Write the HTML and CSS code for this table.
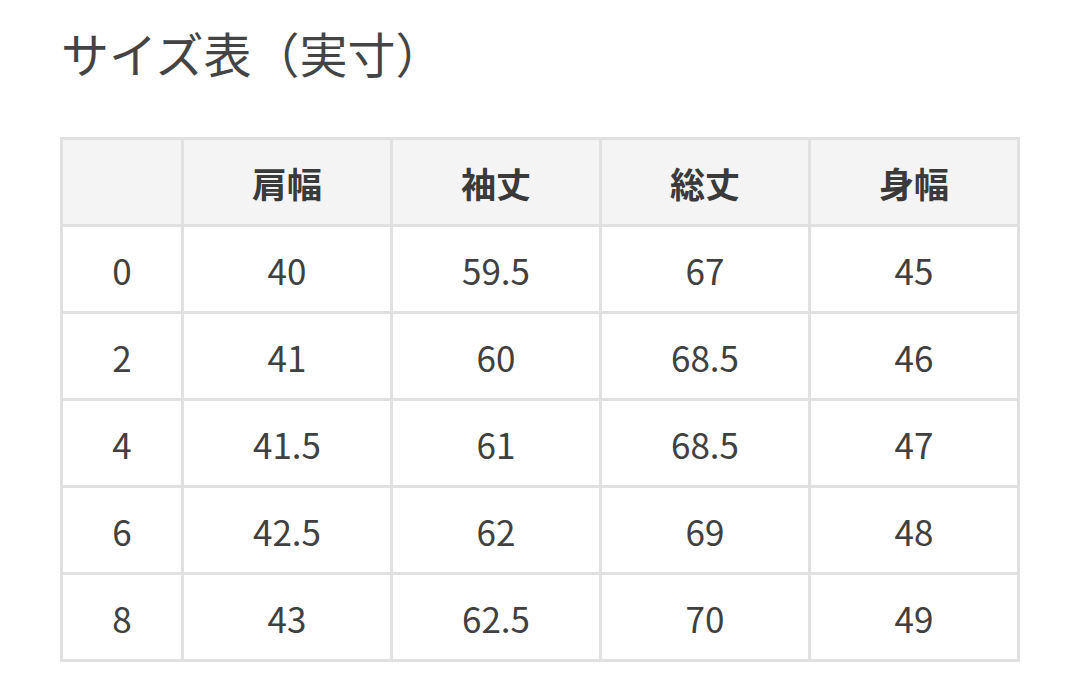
FILE: index.html
```html
<!DOCTYPE html>
<html lang="ja">
<head>
<meta charset="utf-8">
<link rel="stylesheet" href="styles.css">
</head>
<body>
<div class="page">
  <h1 class="title">サイズ表（実寸）</h1>
  <table class="size-table">
    <colgroup>
      <col class="c-first">
      <col class="c-data">
      <col class="c-data">
      <col class="c-data">
      <col class="c-data">
    </colgroup>
    <thead>
      <tr><th></th><th>肩幅</th><th>袖丈</th><th>総丈</th><th>身幅</th></tr>
    </thead>
    <tbody>
      <tr><td>0</td><td>40</td><td>59.5</td><td>67</td><td>45</td></tr>
      <tr><td>2</td><td>41</td><td>60</td><td>68.5</td><td>46</td></tr>
      <tr><td>4</td><td>41.5</td><td>61</td><td>68.5</td><td>47</td></tr>
      <tr><td>6</td><td>42.5</td><td>62</td><td>69</td><td>48</td></tr>
      <tr><td>8</td><td>43</td><td>62.5</td><td>70</td><td>49</td></tr>
    </tbody>
  </table>
</div>
</body>
</html>
```
FILE: styles.css
```css
html, body {
  margin: 0;
  padding: 0;
  background: #ffffff;
}
body {
  font-family: "Noto Sans CJK JP", "Noto Sans", sans-serif;
  color: #3f3f3f;
}
.page {
  padding: 19px 0 0 60px;
}
.title {
  margin: 0 0 0 1px;
  font-size: 48px;
  font-weight: 400;
  line-height: 67px;
  color: #444444;
  letter-spacing: 0;
}
.size-table {
  margin-top: 51px;
  border-collapse: collapse;
  table-layout: fixed;
  width: 959px;
}
.c-first { width: 121px; }
.c-data { width: 209px; }
.size-table th,
.size-table td {
  border: 3px solid #e1e1e1;
  height: 84px;
  padding: 0;
  text-align: center;
  vertical-align: middle;
  font-size: 35px;
  line-height: 1;
}
.size-table th {
  background: #f4f4f4;
  font-weight: 700;
  color: #3a3a3a;
}
.size-table td {
  font-weight: 400;
  color: #404040;
}
```
